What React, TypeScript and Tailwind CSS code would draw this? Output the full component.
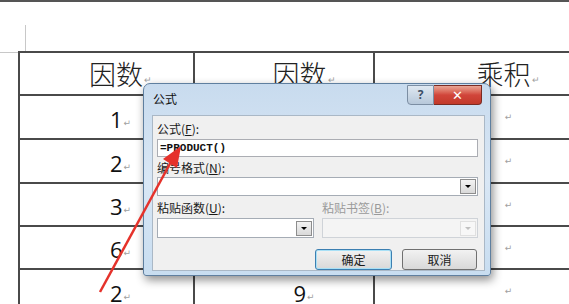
import React from "react";

const cjk = { fontFamily: '"Noto Sans CJK SC", "Noto Sans", sans-serif' };
const mono = { fontFamily: '"Liberation Mono", "DejaVu Sans Mono", monospace' };

// paragraph mark shown by Word after every cell text
function Mark() {
  return (
    <span
      className="ml-[1px] self-end mb-[2px] text-[9px] leading-none text-[#a0a0a0]"
      style={{ fontFamily: '"DejaVu Sans", sans-serif' }}
    >
      ↵
    </span>
  );
}

const rows = [
  ["1", "1"],
  ["2", "4"],
  ["3", "5"],
  ["6", "7"],
  ["2", "9"],
];
const rowHeights = ["h-[44px]", "h-[44px]", "h-[43px]", "h-[43px]", "h-[44px]"];

function Cell({
  text,
  width,
  head,
  shift,
}: {
  text: string;
  width: string;
  head?: boolean;
  shift: string;
}) {
  return (
    <div
      className={`${width} ${shift} shrink-0 flex items-center justify-center border-r-2 border-[#4a4a4a] ${
        head ? "text-[27px] font-light text-[#222]" : "text-[22px] font-medium pt-[3px] text-[#111]"
      }`}
      style={head ? cjk : { fontFamily: '"Open Sans", "Noto Sans", sans-serif' }}
    >
      <span className="flex items-center leading-none">
        {text}
        <Mark />
      </span>
    </div>
  );
}

function Select({ disabled, className }: { disabled?: boolean; className: string }) {
  return (
    <div
      className={`${className} flex justify-end items-center pr-[1px] border ${
        disabled ? "bg-[#f4f4f4] border-[#cfd3d8]" : "bg-white border-[#a5acb5]"
      }`}
    >
      <div
        className={`w-[16px] h-[15px] flex items-center justify-center border ${
          disabled
            ? "border-[#e0e0e0] bg-[#f7f7f7]"
            : "border-[#8d8d8d] bg-gradient-to-b from-[#f3f3f3] to-[#d9d9d9]"
        }`}
      >
        <div
          className={`w-0 h-0 border-l-[3px] border-r-[3px] border-t-[3px] border-l-transparent border-r-transparent ${
            disabled ? "border-t-[#c0c0c0]" : "border-t-black"
          }`}
        />
      </div>
    </div>
  );
}

function FormulaDialog() {
  return (
    <div className="absolute left-[143px] top-[83px] w-[348px] h-[193px] rounded-t-[7px] rounded-b-[3px] border border-[#5f7f9f] bg-gradient-to-b from-[#c8dbee] via-[#d9e7f5] to-[#c8ddf0] shadow-[2px_4px_10px_rgba(0,0,0,0.45)] flex flex-col pl-[8px] pr-[5px] pb-[7px]">
      <div className="h-[31px] flex items-start shrink-0">
        <div className="pt-[9px] pl-[1px] text-[12px] text-[#111] leading-none" style={cjk}>
          公式
        </div>
        <div className="ml-auto flex mt-[1px] mr-[3px]">
          <div className="w-[27px] h-[20px] rounded-bl-[4px] border border-[#7c8ea3] bg-gradient-to-b from-[#dfe8f1] to-[#b7c8da] flex items-center justify-center text-[12px] font-bold text-[#3c4e66] leading-none">
            ?
          </div>
          <div className="w-[48px] h-[20px] rounded-br-[4px] border border-l-0 border-[#7a2b22] bg-gradient-to-b from-[#e8a494] via-[#d1453a] to-[#c23a2a] flex items-center justify-center text-white text-[13px] font-bold leading-none" style={{ fontFamily: '"DejaVu Sans", sans-serif' }}>
            ✕
          </div>
        </div>
      </div>
      <div className="flex-1 border border-[#aab8c6] bg-[#f0f0f0] pl-[4px] pr-[6px] pt-[7px] text-[12px] leading-none text-[#1a1a1a]" style={cjk}>
        <div>
          公式(<span className="underline">F</span>):
        </div>
        <div className="mt-[4px] h-[18px] bg-white border border-[#abadb3] flex items-center pl-[2px] text-[11px] font-bold text-[#111]" style={mono}>
          =PRODUCT()
        </div>
        <div className="mt-[5px]">
          编号格式(<span className="underline">N</span>):
        </div>
        <Select className="mt-[3px] h-[19px] w-full" />
        <div className="mt-[6px] flex">
          <div className="w-[165px]">
            粘贴函数(<span className="underline">U</span>):
          </div>
          <div className="text-[#9a9a9a]">
            粘贴书签(<span className="underline">B</span>):
          </div>
        </div>
        <div className="mt-[4px] flex">
          <Select className="h-[20px] w-[157px]" />
          <Select disabled className="ml-[8px] h-[20px] w-[156px]" />
        </div>
        <div className="mt-[11px] flex justify-end pr-[1px]">
          <div className="w-[77px] h-[21px] rounded-[3px] border border-[#3c7fb1] shadow-[inset_0_0_0_1px_#a8e0f6] bg-gradient-to-b from-[#f2f2f2] to-[#d8d8d8] flex items-center justify-center">
            确定
          </div>
          <div className="ml-[10px] w-[75px] h-[21px] rounded-[3px] border border-[#707070] bg-gradient-to-b from-[#f2f2f2] to-[#d8d8d8] flex items-center justify-center">
            取消
          </div>
        </div>
      </div>
    </div>
  );
}

export default function App() {
  return (
    <div className="relative w-[569px] h-[304px] overflow-hidden bg-white">
      <div className="h-[2px] bg-[#555]" />
      {/* crop mark above the table */}
      <div className="h-[49px] pt-[23px]">
        <div className="ml-[25px] h-[26px] w-px bg-[#c8c8c8]" />
      </div>
      <div className="flex">
        <div className="w-[18px] h-px mt-[1px] bg-[#c8c8c8] shrink-0" />
        <div className="border-t-2 border-l-2 border-[#4a4a4a] shrink-0">
          <div className="flex h-[43px] border-b-2 border-[#4a4a4a]">
            <Cell head text="因数" width="w-[175px]" shift="pl-[28px]" />
            <Cell head text="因数" width="w-[180px]" shift="pl-[40px]" />
            <Cell head text="乘积" width="w-[268px]" shift="pl-0" />
          </div>
          {rows.map((r, i) => (
            <div key={i} className={`flex ${rowHeights[i]} border-b-2 border-[#4a4a4a]`}>
              <Cell text={r[0]} width="w-[175px]" shift="pl-[28px]" />
              <Cell text={r[1]} width="w-[180px]" shift="pl-[40px]" />
              <Cell text="" width="w-[268px]" shift="pl-0" />
            </div>
          ))}
        </div>
      </div>

      <FormulaDialog />

      {/* red arrow pointing at the formula */}
      <svg className="absolute left-0 top-0" width="569" height="304">
        <line x1="100" y1="292" x2="172" y2="160" stroke="#e5322b" strokeWidth="2.5" />
        <polygon points="181,146 177,168 163,159" fill="#e5322b" />
      </svg>
    </div>
  );
}
